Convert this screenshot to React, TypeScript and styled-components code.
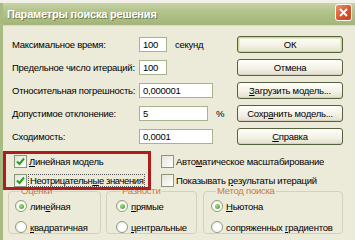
import React from 'react'
import styled, { createGlobalStyle } from 'styled-components'

const GlobalStyle = createGlobalStyle`
  html, body {
    margin: 0;
    padding: 0;
    background: #f2f1e8;
  }
  body {
    font-family: "Liberation Sans", Arial, sans-serif;
    font-size: 9.5px;
    letter-spacing: -0.25px;
    color: #000;
  }
`;

const Window = styled.div`
  width: 352px;
  height: 237px;
  margin-top: 3px;
  border-left: 3px solid #a9ba82;
  display: flex;
  flex-direction: column;
  overflow: hidden;
`;

const TitleBar = styled.div`
  height: 22px;
  flex-shrink: 0;
  display: flex;
  align-items: center;
  justify-content: space-between;
  padding: 0 3px 0 4px;
  background: linear-gradient(#c8d3a8, #b3c48c 35%, #a9ba80 80%, #a3b47a);
  border-bottom: 1px solid #d8dcc2;
`;

const Title = styled.span`
  font-family: "Liberation Sans", Arial, sans-serif;
  font-weight: bold;
  font-size: 11px;
  color: #fff;
  letter-spacing: -0.2px;
  text-shadow: 1px 1px 0 #6f7d52;
`;

const CloseBtn = styled.div`
  width: 15px;
  height: 15px;
  margin-top: -3px;
  border: 1px solid #fff;
  border-radius: 3px;
  background: linear-gradient(135deg, #f09070, #d9542e 55%, #c4401e);
  display: flex;
  align-items: center;
  justify-content: center;
`;

const Body = styled.div`
  position: relative;
  flex: 1;
  background: #ecead9;
  padding: 10px 0 0 5px;
`;

const ParamGrid = styled.div`
  display: grid;
  grid-template-columns: 127px 98px 106px;
  grid-auto-rows: 17px;
  row-gap: 6px;
  padding-left: 4px;
  align-items: center;
`;

const Label = styled.span`
  white-space: nowrap;
`;

const Field = styled.div`
  display: flex;
  align-items: center;
  gap: 8px;
`;

const Input = styled.div<{ $w: number }>`
  width: ${p => p.$w}px;
  height: 15px;
  box-sizing: border-box;
  border: 1px solid #a5b48a;
  background: #fff;
  padding: 0 3px;
  display: flex;
  align-items: center;
`;

const Button = styled.div<{ $default?: boolean }>`
  height: 17px;
  box-sizing: border-box;
  border: 1px solid #56623f;
  border-radius: 3px;
  background: linear-gradient(#fffffa, #f4f2e6 55%, #e2dfcd);
  display: flex;
  align-items: center;
  justify-content: center;
  box-shadow: ${p => (p.$default ? 'inset 0 0 0 1px #c9d69a, inset 0 0 0 2px #e4ebc3' : 'inset 0 -1px 0 #d6d2bf')};
`;

const U = styled.span`
  text-decoration: underline;
`;

const CheckGrid = styled.div`
  display: grid;
  grid-template-columns: 147px auto;
  grid-auto-rows: 13px;
  row-gap: 6px;
  padding-left: 6px;
  margin-top: 10px;
  align-items: center;
`;

const CheckItem = styled.label`
  display: flex;
  align-items: center;
  gap: 2px;
  white-space: nowrap;
`;

const Box = styled.span`
  width: 13px;
  height: 13px;
  box-sizing: border-box;
  border: 1px solid #8a977a;
  background: linear-gradient(135deg, #e6e3d6, #fff);
  display: flex;
  align-items: center;
  justify-content: center;
  flex-shrink: 0;
`;

const FocusText = styled.span`
  outline: 1px dotted #555;
  padding: 0 1px;
  letter-spacing: -0.4px;
`;

const Groups = styled.div`
  display: grid;
  grid-template-columns: 93px 91px 141px;
  column-gap: 5px;
  margin-top: -2px;
  & > :nth-child(3) {
    margin-left: 1px;
  }
`;

const Group = styled.fieldset<{ $inset: number }>`
  margin: 0;
  height: 49px;
  box-sizing: border-box;
  border: 1px solid #d3d1bd;
  border-radius: 4px;
  padding: 3px 0 0 ${p => p.$inset}px;
  display: flex;
  flex-direction: column;
  gap: 9px;
`;

const Legend = styled.legend`
  color: #c97a40;
  padding: 0 1px;
  margin-left: 5px;
  line-height: 12px;
`;

const RadioItem = styled.label`
  display: flex;
  align-items: center;
  gap: 3px;
  height: 12px;
  white-space: nowrap;
`;

const Radio = styled.span<{ $on?: boolean }>`
  width: 12px;
  height: 12px;
  box-sizing: border-box;
  border-radius: 50%;
  border: 1px solid #8f9c7c;
  background: radial-gradient(circle at 60% 60%, #fff 40%, #e4e2d4);
  display: flex;
  align-items: center;
  justify-content: center;
  flex-shrink: 0;
  &::after {
    content: '';
    width: 5px;
    height: 5px;
    border-radius: 50%;
    background: ${p => (p.$on ? 'radial-gradient(circle at 35% 35%, #9ee07a, #3c9a22)' : 'transparent')};
  }
`;

const Highlight = styled.div`
  position: absolute;
  left: 0;
  top: 125px;
  width: 148px;
  height: 39px;
  box-sizing: border-box;
  border: 3px solid #ae1c1c;
  pointer-events: none;
`;

const Check = () => (
  <svg width="9" height="9" viewBox="0 0 9 9">
    <path d="M1 4.5 L3.5 7 L8 1.5" fill="none" stroke="#21a121" strokeWidth="2" />
  </svg>
);

export default function App() {
  return (
    <>
      <GlobalStyle />
      <Window>
        <TitleBar>
          <Title>Параметры поиска решения</Title>
          <CloseBtn>
            <svg width="9" height="9" viewBox="0 0 9 9">
              <path d="M1 1 L8 8 M8 1 L1 8" stroke="#fff" strokeWidth="1.8" />
            </svg>
          </CloseBtn>
        </TitleBar>
        <Body>
          <ParamGrid>
            <Label>Максимальное время:</Label>
            <Field>
              <Input $w={28}>100</Input>
              <span>секунд</span>
            </Field>
            <Button $default>ОК</Button>

            <Label>Предельное число итераций:</Label>
            <Field>
              <Input $w={28}>100</Input>
            </Field>
            <Button>Отмена</Button>

            <Label>Относительная погрешность:</Label>
            <Field>
              <Input $w={74}>0,000001</Input>
            </Field>
            <Button><span><U>З</U>агрузить модель...</span></Button>

            <Label>Допустимое отклонение:</Label>
            <Field>
              <Input $w={69}>5</Input>
              <span>%</span>
            </Field>
            <Button><span>Сохр<U>а</U>нить модель...</span></Button>

            <Label>Сходимость:</Label>
            <Field>
              <Input $w={74}>0,0001</Input>
            </Field>
            <Button><span><U>С</U>правка</span></Button>
          </ParamGrid>

          <CheckGrid>
            <CheckItem>
              <Box><Check /></Box>
              <span><U>Л</U>инейная модель</span>
            </CheckItem>
            <CheckItem>
              <Box />
              <span>Авто<U>м</U>атическое масштабирование</span>
            </CheckItem>
            <CheckItem>
              <Box><Check /></Box>
              <FocusText>Неотрицательн<U>ы</U>е значения</FocusText>
            </CheckItem>
            <CheckItem>
              <Box />
              <span>Показывать <U>р</U>езультаты итераций</span>
            </CheckItem>
          </CheckGrid>

          <Groups>
            <Group $inset={6}>
              <Legend>Оценки</Legend>
              <RadioItem><Radio $on /><span>лин<U>е</U>йная</span></RadioItem>
              <RadioItem><Radio /><span><U>к</U>вадратичная</span></RadioItem>
            </Group>
            <Group $inset={9}>
              <Legend>Разности</Legend>
              <RadioItem><Radio $on /><span><U>п</U>рямые</span></RadioItem>
              <RadioItem><Radio /><span><U>ц</U>ентральные</span></RadioItem>
            </Group>
            <Group $inset={7}>
              <Legend>Метод поиска</Legend>
              <RadioItem><Radio $on /><span><U>Н</U>ьютона</span></RadioItem>
              <RadioItem><Radio /><span>сопряженных <U>г</U>радиентов</span></RadioItem>
            </Group>
          </Groups>

          <Highlight />
        </Body>
      </Window>
    </>
  )
}
